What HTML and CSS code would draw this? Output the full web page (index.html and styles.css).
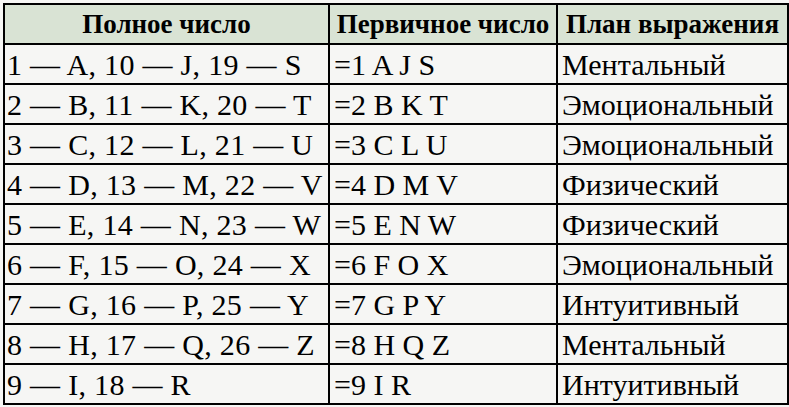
FILE: index.html
```html
<!DOCTYPE html>
<html lang="ru">
<head>
<meta charset="utf-8">
<link rel="stylesheet" href="styles.css">
</head>
<body>
<table class="tbl">
<colgroup><col class="c1"><col class="c2"><col class="c3"></colgroup>
<thead>
<tr><th>Полное число</th><th>Первичное число</th><th>План выражения</th></tr>
</thead>
<tbody>
<tr><td class="full">1 — A, 10 — J, 19 — S</td><td>=1 A J S</td><td>Ментальный</td></tr>
<tr><td class="full">2 — B, 11 — K, 20 — T</td><td>=2 B K T</td><td>Эмоциональный</td></tr>
<tr><td class="full">3 — C, 12 — L, 21 — U</td><td>=3 C L U</td><td>Эмоциональный</td></tr>
<tr><td class="full">4 — D, 13 — M, 22 — V</td><td>=4 D M V</td><td>Физический</td></tr>
<tr><td class="full">5 — E, 14 — N, 23 — W</td><td>=5 E N W</td><td>Физический</td></tr>
<tr><td class="full">6 — F, 15 — O, 24 — X</td><td>=6 F O X</td><td>Эмоциональный</td></tr>
<tr><td class="full">7 — G, 16 — P, 25 — Y</td><td>=7 G P Y</td><td>Интуитивный</td></tr>
<tr><td class="full">8 — H, 17 — Q, 26 — Z</td><td>=8 H Q Z</td><td>Ментальный</td></tr>
<tr><td class="full">9 — I, 18 — R</td><td>=9 I R</td><td>Интуитивный</td></tr>
</tbody>
</table>
</body>
</html>
```
FILE: styles.css
```css
html, body {
  margin: 0;
  padding: 0;
  background: #f6f6f4;
}
body {
  padding: 3px 0 0 3px;
  font-family: "Liberation Serif", "Times New Roman", serif;
  color: #000;
}
.tbl {
  border-collapse: collapse;
  table-layout: fixed;
  width: 784px;
  font-family: "Liberation Serif", "Times New Roman", serif;
}
.c1 { width: 325px; }
.c2 { width: 228px; }
.c3 { width: 231px; }
.tbl th, .tbl td {
  border: 2px solid #000;
  height: 40px;
  box-sizing: border-box;
  white-space: nowrap;
  overflow: hidden;
  vertical-align: middle;
}
.tbl th {
  background: #d9e3d4;
  font-weight: bold;
  font-size: 27px;
  line-height: 1;
  text-align: center;
  padding: 0;
}
.tbl td {
  font-size: 30px;
  line-height: 1;
  text-align: left;
  padding: 1px 0 0 4px;
}
.tbl td.full {
  padding-left: 2px;
  letter-spacing: 0.3px;
}
```
